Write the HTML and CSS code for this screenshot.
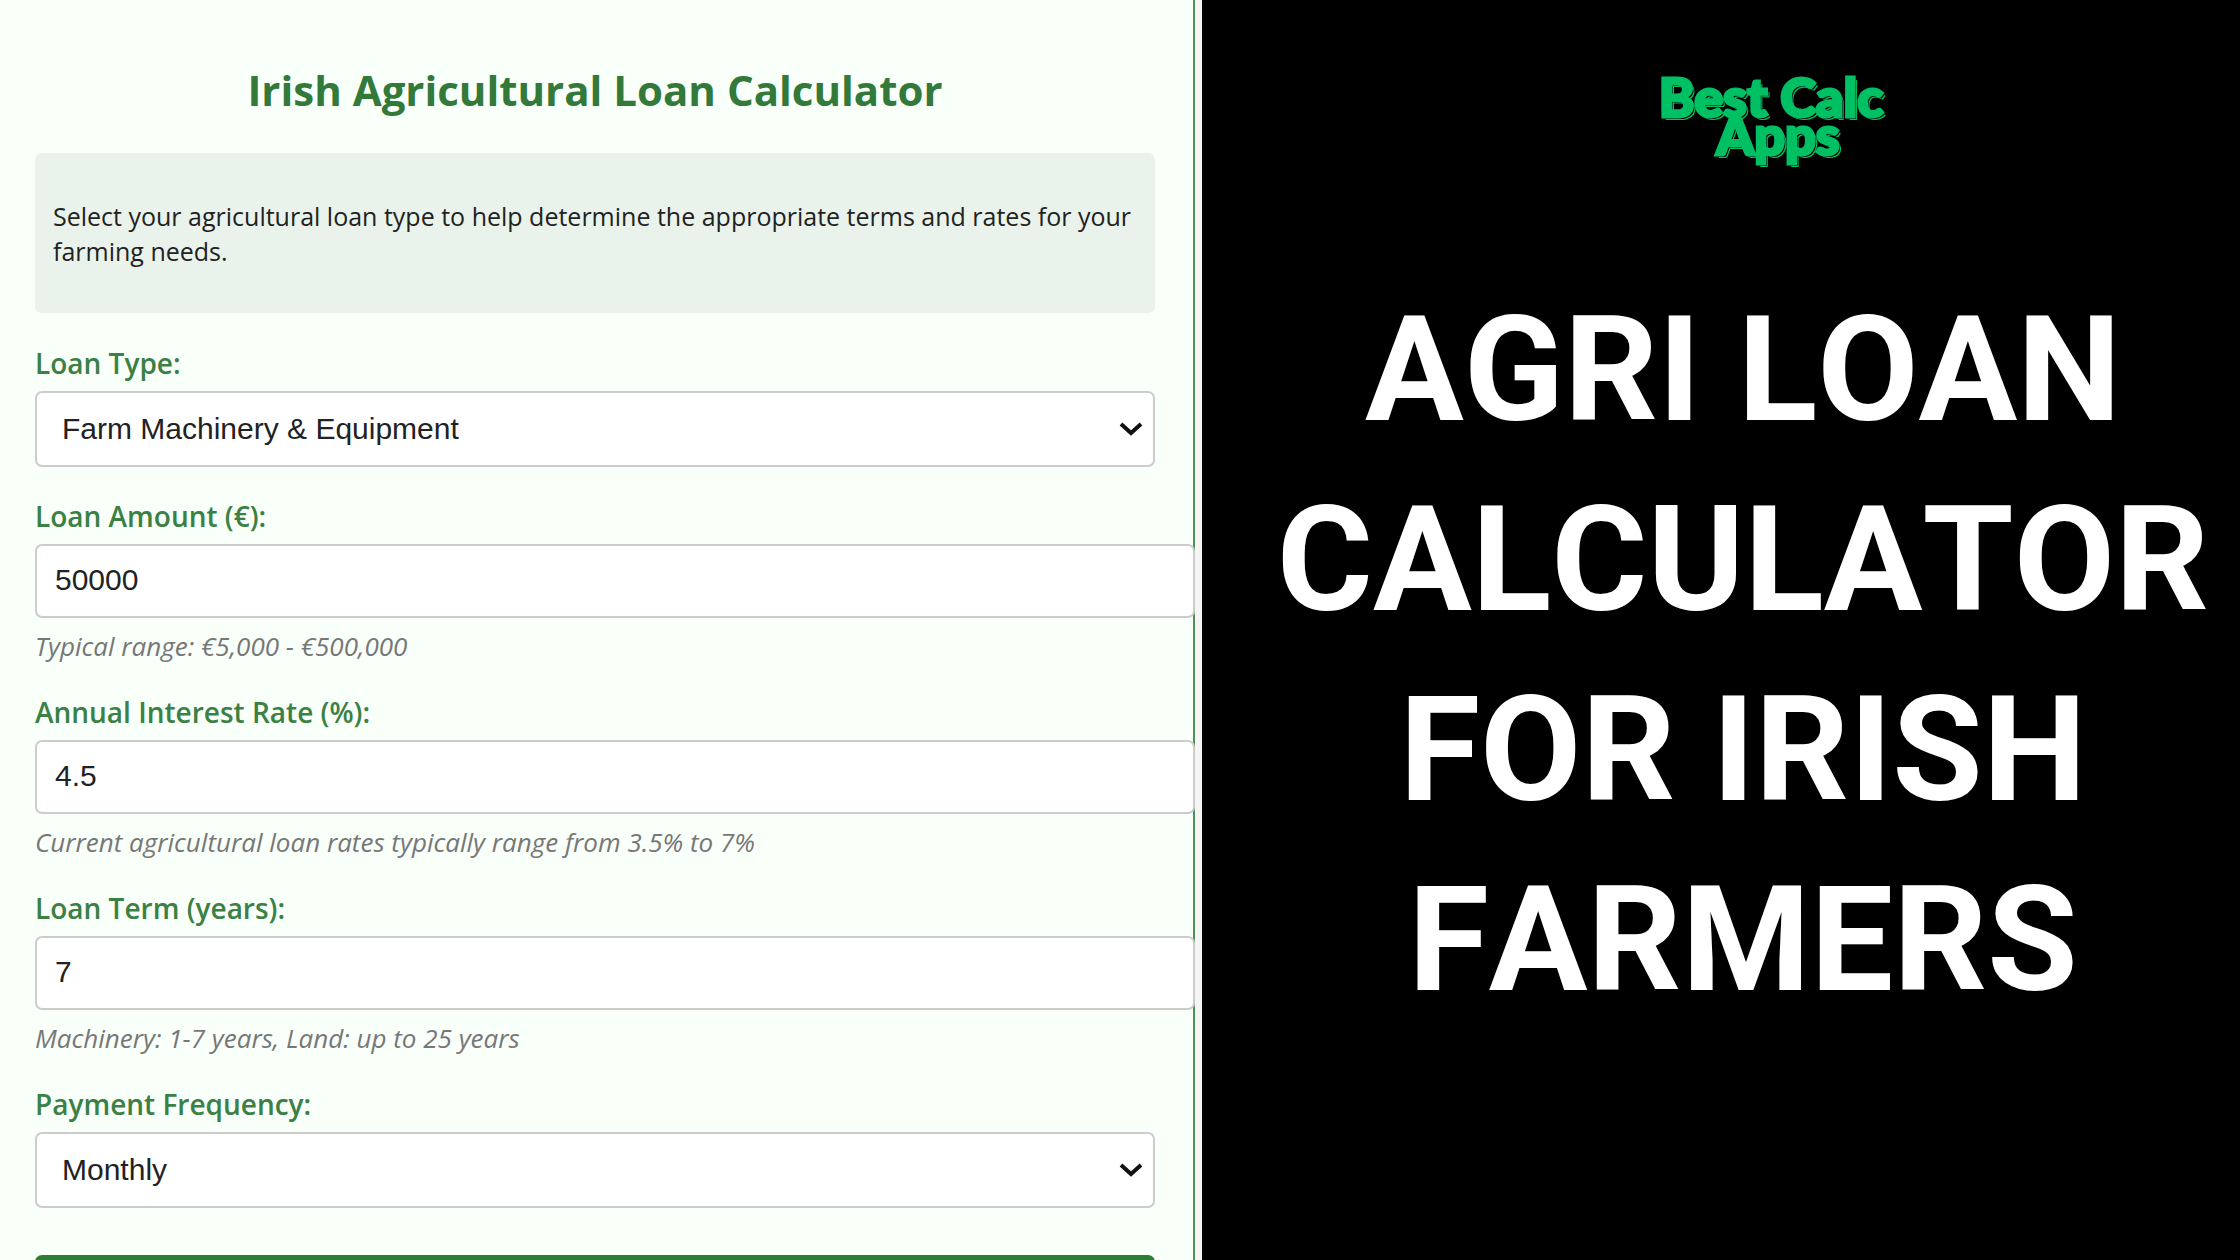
FILE: index.html
```html
<!DOCTYPE html>
<html lang="en">
<head>
  <title>Irish Agricultural Loan Calculator</title>
  <meta charset="UTF-8">
  <meta name="viewport" content="width=device-width,initial-scale=1">
  <link rel="stylesheet" href="styles.css">
</head>

<body>
  <div class="page">
    <div class="calculator-side">
      <form class="calculator">
        <h1>Irish Agricultural Loan Calculator</h1>

        <div class="info">
          <p>Select your agricultural loan type to help determine the appropriate terms and rates for your farming needs.</p>
        </div>

        <div class="form-group">
          <label for="loanType">Loan Type:</label>
          <div class="select-wrap">
            <select id="loanType">
              <option>Farm Machinery &amp; Equipment</option>
            </select>
            <svg class="chevron" viewBox="0 0 24 16" aria-hidden="true"><path d="M2 3l10 9 10-9"/></svg>
          </div>
        </div>

        <div class="form-group">
          <label for="loanAmount">Loan Amount (€):</label>
          <input type="text" inputmode="numeric" id="loanAmount" value="50000">
          <div class="hint">Typical range: €5,000 - €500,000</div>
        </div>

        <div class="form-group">
          <label for="interestRate">Annual Interest Rate (%):</label>
          <input type="text" inputmode="decimal" id="interestRate" value="4.5">
          <div class="hint">Current agricultural loan rates typically range from 3.5% to 7%</div>
        </div>

        <div class="form-group">
          <label for="loanTerm">Loan Term (years):</label>
          <input type="text" inputmode="numeric" id="loanTerm" value="7">
          <div class="hint">Machinery: 1-7 years, Land: up to 25 years</div>
        </div>

        <div class="form-group">
          <label for="frequency">Payment Frequency:</label>
          <div class="select-wrap">
            <select id="frequency">
              <option>Monthly</option>
            </select>
            <svg class="chevron" viewBox="0 0 24 16" aria-hidden="true"><path d="M2 3l10 9 10-9"/></svg>
          </div>
        </div>

        <button type="button" class="btn" aria-label="Calculate"></button>
      </form>
    </div>

    <div class="promo">
      <div class="logo">Best Calc <span class="logo-apps">Apps</span></div>
      <h2>Agri Loan Calculator for Irish Farmers</h2>
    </div>
  </div>
</body>
</html>
```
FILE: styles.css
```css
*, *:before, *:after {
  box-sizing: border-box;
}

body {
  margin: 0;
  height: 100vh;
  overflow: hidden;
  background: #000;
  font-family: "Open Sans", "Noto Sans", sans-serif;
}

.page {
  display: grid;
  grid-template-columns: 1202fr 1038fr;
  height: 100%;
}

.calculator-side {
  min-width: 0;
  height: 100vh;
  padding-right: 7px;
  overflow: hidden;
  background: #f5f5f5;
}

.calculator {
  min-height: 100%;
  padding: 60px 38px 0 35px;
  border-right: 2px solid #4f8f57;
  background: #f9fff9;
}

.calculator h1 {
  margin: 0 0 33px;
  color: #32793a;
  font-size: 42px;
  line-height: 60px;
  text-align: center;
}

.info {
  margin-bottom: 31px;
  padding: 46px 10px 44px 18px;
  border-radius: 7px;
  background: #e9f3eb;
}

.info p {
  margin: 0;
  color: #222;
  font-size: 25px;
  line-height: 35px;
}

.form-group {
  margin-bottom: 30px;
}

.form-group label {
  display: block;
  margin-bottom: 9px;
  color: #3b8044;
  font-size: 28px;
  font-weight: 600;
  line-height: 38px;
}

/* inputs keep the content-box width, so padding runs past the card edge */
.form-group input {
  display: block;
  box-sizing: content-box;
  width: 100%;
  height: 34px;
  padding: 17px 18px 19px;
  border: 2px solid #ccc;
  border-radius: 7px;
  background: #fff;
  color: #222;
  font-family: "Liberation Sans", Arial, sans-serif;
  font-size: 30px;
}

.select-wrap {
  position: relative;
}

.form-group select {
  display: block;
  width: 100%;
  height: 76px;
  padding: 0 50px 2px 25px;
  border: 2px solid #ccc;
  border-radius: 7px;
  background: #fff;
  color: #222;
  font-family: "Liberation Sans", Arial, sans-serif;
  font-size: 30px;
  appearance: none;
}

.chevron {
  position: absolute;
  top: 30px;
  right: 12px;
  width: 24px;
  height: 16px;
  fill: none;
  stroke: #111;
  stroke-width: 4;
  pointer-events: none;
}

.hint {
  margin-top: 10px;
  margin-bottom: -1px;
  color: #777;
  font-size: 26px;
  font-style: italic;
  line-height: 36px;
}

.btn {
  width: 100%;
  height: 76px;
  margin-top: 17px;
  border: none;
  border-radius: 7px;
  background: #2e7d32;
}

.promo {
  padding: 78px 20px 0 64px;
  background: #000;
  color: #fff;
  text-align: center;
}

.logo {
  padding-left: 56px;
  color: #00c064;
  font-family: Lato, sans-serif;
  font-size: 54px;
  font-weight: 900;
  line-height: 38px;
  -webkit-text-stroke: 3px #00c064;
  text-shadow: 1px 1px 0 #000, 2px 2px 0 #000, 3px 3px 0 #00c064;
}

.logo-apps {
  display: block;
  padding-left: 14px;
}

.promo h2 {
  margin: 121px 0 0;
  font-family: Roboto, sans-serif;
  font-size: 147px;
  font-weight: 700;
  font-kerning: none;
  line-height: 190px;
  text-transform: uppercase;
}
```
